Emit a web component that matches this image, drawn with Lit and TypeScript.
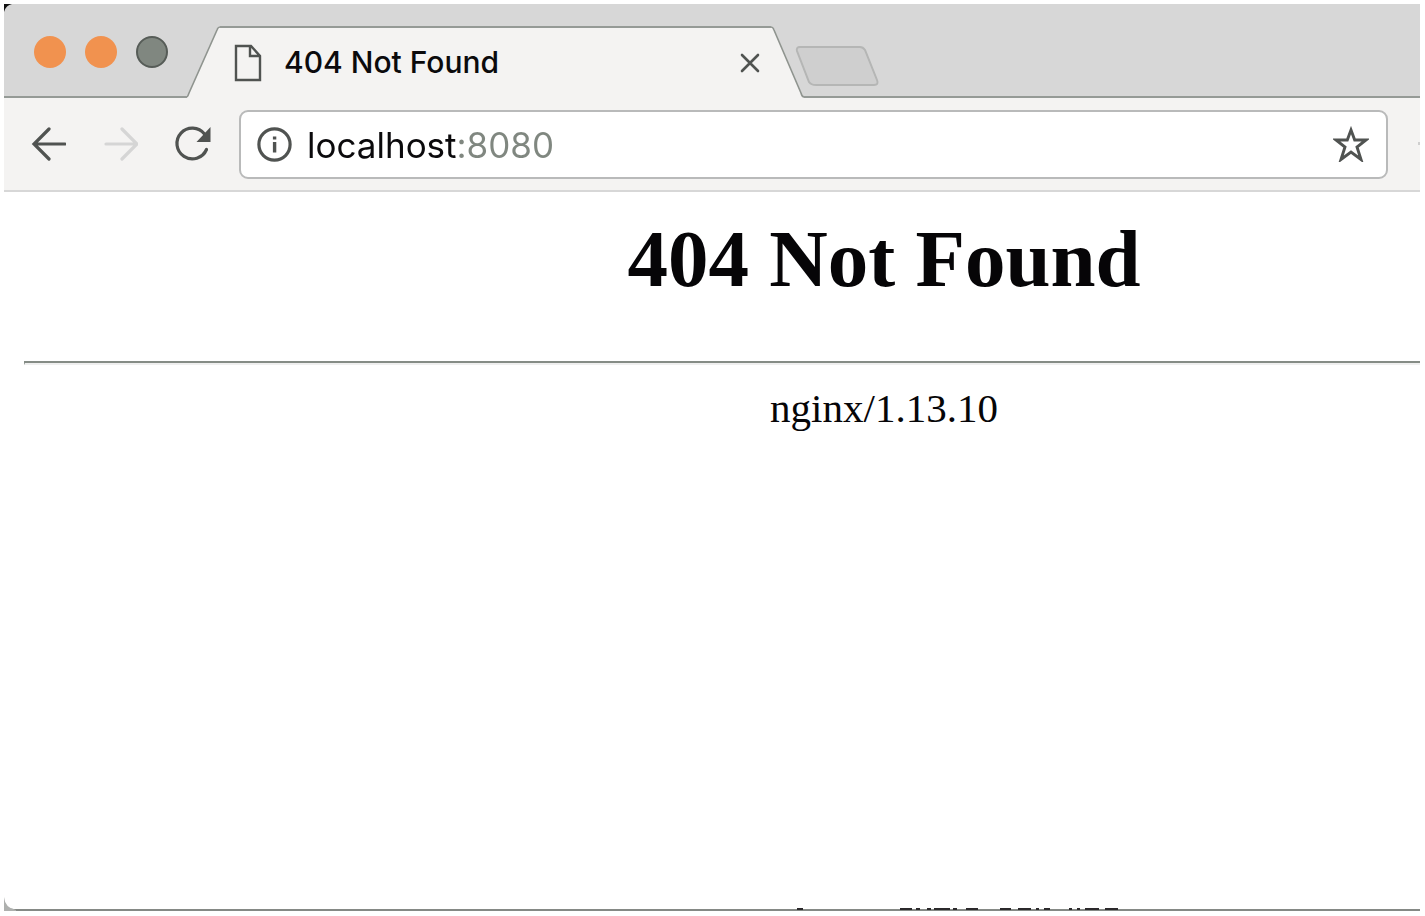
import { LitElement, html, css, svg } from "lit";
import { customElement, property } from "lit/decorators.js";

@customElement("browser-tabs")
class BrowserTabs extends LitElement {
  @property() label = "";

  static styles = css`
    :host { display: flex; align-items: stretch; height: 94px; background: #d7d7d7; }
    .lights { display: flex; align-items: center; gap: 19px; padding: 4px 20px 0 30px; box-sizing: border-box; border-bottom: 2px solid #959a96; width: 183px; }
    button { border: 0; padding: 0; margin: 0; background: none; display: block; flex: none; }
    svg { display: block; flex: none; }
    .light { width: 32px; height: 32px; border-radius: 50%; background: #f1924f; }
    .light.zoom { background: #808780; border: 2px solid #565c57; }
    .tab { display: flex; flex: 0 1 617px; min-width: 0; padding-top: 22px; }
    .face { flex: 1; min-width: 0; display: flex; align-items: center; box-sizing: border-box; height: 72px; padding: 0 11px 0 14px; background: #f4f3f2; border-top: 2px solid #959a96; }
    .title { flex: 1; margin-left: 22px; padding-bottom: 2px; font: 500 30px/40px Inter, "Liberation Sans", sans-serif; color: #0b0a0c; white-space: nowrap; overflow: hidden; }
    .rest { flex: 1; border-bottom: 2px solid #959a96; display: flex; align-items: center; padding-top: 32px; box-sizing: border-box; }
    .new { margin: 0 0 0 -10px; }
  `;

  render() {
    return html`
      <div class="lights">
        <button class="light" aria-label="Close window"></button>
        <button class="light" aria-label="Minimise window"></button>
        <button class="light zoom" aria-label="Zoom window"></button>
      </div>
      <div class="tab">
        <svg width="33" height="72" viewBox="0 0 33 72">
          <path d="M0 72V71L30 3Q31 0 33 0V72Z" fill="#f4f3f2" />
          <path d="M0 71Q1 70 2 67L30 4Q31 1 33 1" fill="none" stroke="#8f948f" stroke-width="1.6" />
        </svg>
        <div class="face">
          <svg width="28" height="38" viewBox="0 0 28 38">
            <path d="M2 2H17L26 12V36H2Z M16 3V12H25" fill="none" stroke="#505351" stroke-width="2.4" />
          </svg>
          <span class="title">${this.label}</span>
          <button aria-label="Close tab">
            <svg width="20" height="20" viewBox="0 0 20 20">
              <path d="M2 2L18 18M18 2L2 18" stroke="#505351" stroke-width="2.6" stroke-linecap="round" />
            </svg>
          </button>
        </div>
        <svg width="33" height="72" viewBox="0 0 33 72">
          <path d="M0 0Q2 0 3 3L31 68Q32 71 33 71V72H0Z" fill="#f4f3f2" />
          <path d="M0 1Q2 1 3 4L30 67Q31 71 33 71" fill="none" stroke="#8f948f" stroke-width="1.6" />
        </svg>
      </div>
      <div class="rest">
        <button class="new" aria-label="New tab">
          <svg width="86" height="42" viewBox="0 0 86 42">
            <path d="M6 2H66Q69 2 71 5L83 35Q85 40 80 40H22Q17 40 15 37L3 6Q2 2 6 2Z" fill="#cfcfcf" stroke="#b5b6b5" stroke-width="2" />
          </svg>
        </button>
      </div>
    `;
  }
}

@customElement("browser-toolbar")
class BrowserToolbar extends LitElement {
  @property() address = "";

  static styles = css`
    :host { display: flex; align-items: center; height: 94px; box-sizing: border-box; padding: 0 0 0 22px; background: #f4f3f2; border-bottom: 2px solid #d7d7d7; }
    button { border: 0; padding: 0; margin: 0; background: none; display: block; flex: none; }
    svg { display: block; }
    .nav { display: flex; gap: 32px; margin-right: 25px; }
    .field { flex: 1; min-width: 0; display: flex; align-items: center; height: 69px; box-sizing: border-box; padding: 0 17px 0 16px; background: #fff; border: 2px solid #b9baba; border-radius: 9px; }
    input {
      flex: 1; min-width: 0; height: 48px; margin-left: 14px; padding: 2px 0 0; box-sizing: border-box; border: 0; outline: 0;
      font: 400 35px/46px Inter, "Liberation Sans", sans-serif;
      color: transparent; background: linear-gradient(to right, #0b0a0c 149px, #808780 149px);
      -webkit-background-clip: text; background-clip: text;
    }
    .edge { margin-left: 30px; }
  `;

  render() {
    return html`
      <div class="nav">
        <button aria-label="Back">
          <svg width="40" height="40" viewBox="0 0 40 40">
            <path d="M39 20H9M23 5L8 20L23 35" fill="none" stroke="#505351" stroke-width="3.2" stroke-linecap="round" />
          </svg>
        </button>
        <button aria-label="Forward" disabled>
          <svg width="40" height="40" viewBox="0 0 40 40">
            <path d="M8 20H38M24 5L39 20L24 35" fill="none" stroke="#d5d5d5" stroke-width="3.2" stroke-linecap="round" />
          </svg>
        </button>
        <button aria-label="Reload">
          <svg width="44" height="40" viewBox="0 0 44 40">
            <path d="M36.500 25.500A15.400 15.400 0 1 1 34.500 10" fill="none" stroke="#505351" stroke-width="3.2" stroke-linecap="round" />
            <path d="M40.500 3V18H26.500Z" fill="#505351" />
          </svg>
        </button>
      </div>
      <div class="field">
        <button aria-label="Site information">
          <svg width="36" height="36" viewBox="0 0 36 36">
            <circle cx="17.500" cy="18.500" r="15.6" fill="none" stroke="#505351" stroke-width="3.2" />
            <path d="M15.900 10.500H19.300V13.500H15.900ZM15.900 16H19.300V26.500H15.900Z" fill="#505351" />
          </svg>
        </button>
        <input type="text" aria-label="Address" spellcheck="false" .value=${this.address} />
        <button aria-label="Bookmark this page">
          <svg width="36" height="36" viewBox="0 0 36 36">
            <path d="M18 4L21.7 14H33L24 21L28 33.500L18 26L8 33.500L12 21L3 14H14.3Z" fill="none" stroke="#505351" stroke-width="2.9" />
          </svg>
        </button>
      </div>
      <svg class="edge" width="2" height="4"><rect width="2" height="3" fill="#cfcfcf" /></svg>
    `;
  }
}

@customElement("app-root")
class AppRoot extends LitElement {
  static styles = css`
    :host { display: flex; flex-direction: column; min-height: 100vh; box-sizing: border-box; padding: 4px 5px 5px 4px; background: #fff; }
    .window { flex: 1; display: flex; flex-direction: column; overflow: hidden; position: relative; }
    .corner { position: absolute; left: 0; top: 0; }
    .page { flex: 1; overflow: hidden; padding-left: 20px; border-bottom: 2px solid #858985; border-bottom-left-radius: 10px; color: #060507; font-family: "Liberation Serif", "Times New Roman", serif; text-align: center; }
    .sheet { width: calc(100% + 324px); }
    h1 { margin: 20px 0 0; font-size: 81px; line-height: 94px; font-weight: 700; }
    hr { margin: 55px 0 20px; border: 0; border-top: 2px solid #858c86; border-bottom: 2px solid #efefef; border-left: 1px solid #858c86; }
    p { margin: 0; font-size: 41px; line-height: 46px; }
    .behind { position: absolute; left: 0; bottom: 0; height: 3px; width: 100%; }
    .under { position: absolute; left: 0; bottom: 0; }
  `;

  render() {
    return html`
      <div class="window">
        <browser-tabs label="404 Not Found"></browser-tabs>
        <browser-toolbar address="localhost:8080"></browser-toolbar>
        <main class="page">
          <div class="sheet">
            <h1>404 Not Found</h1>
            <hr />
            <p>nginx/1.13.10</p>
          </div>
        </main>
        <svg class="corner" width="8" height="8" viewBox="0 0 8 8"><path d="M0 0H8Q2 1 0 8Z" fill="#111" /></svg>
        <svg class="behind">
          ${[[793, 6], [896, 12], [912, 4], [923, 4], [930, 16], [949, 4], [962, 12], [996, 11], [1014, 13], [1032, 3], [1040, 6], [1065, 3], [1073, 3], [1081, 14], [1101, 13]].map(
            ([x, w]) => svg`<rect x=${x} y="0" width=${w} height="2" fill="#2b292b" />`
          )}
        </svg>
        <svg class="under" width="12" height="14" viewBox="0 0 12 14"><path d="M0 0Q1 11 12 13V14H0Z" fill="#aeb0ae" /></svg>
      </div>
    `;
  }
}
